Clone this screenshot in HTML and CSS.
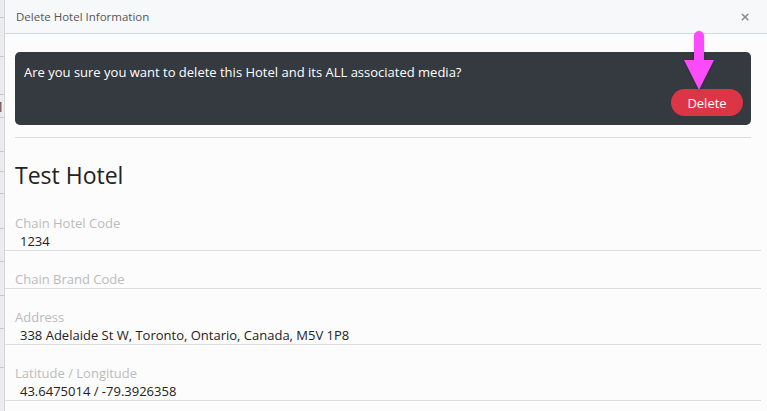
FILE: index.html
```html
<!DOCTYPE html>
<html lang="en">
<head>
    <meta charset="UTF-8">
    <meta name="viewport" content="width=device-width, initial-scale=1.0">
    <title>Delete Hotel Information</title>
    <link rel="stylesheet" href="styles.css">
</head>
<body>
    <div class="page">
        <!-- the table behind the dialog, only a sliver shows -->
        <div class="backdrop">
            <div class="bg-row" style="height:18px"></div>
            <div class="bg-row" style="height:39px"></div>
            <div class="bg-row" style="height:38px"></div>
            <div class="bg-row bg-num" style="height:23px">1</div>
            <div class="bg-row" style="height:34px"></div>
            <div class="bg-row" style="height:20px"></div>
            <div class="bg-row" style="height:22px"></div>
            <div class="bg-row" style="height:35px"></div>
            <div class="bg-row" style="height:33px"></div>
            <div class="bg-row" style="height:34px"></div>
            <div class="bg-row" style="height:33px"></div>
            <div class="bg-row" style="height:39px"></div>
        </div>

        <div class="modal">
            <div class="modal-header">
                <span class="modal-title">Delete Hotel Information</span>
                <span class="close">&times;</span>
            </div>

            <div class="modal-body">
                <div class="confirm">
                    <p>Are you sure you want to delete this Hotel and its ALL associated media?</p>
                    <div class="confirm-actions">
                        <button class="btn-delete">Delete</button>
                        <svg class="pointer" width="34" height="62" viewBox="0 0 34 62">
                            <path d="M12 6 a5 5 0 0 1 10 0 V30 H32 L17 60 L2 30 H12 Z" fill="#fb4cfb"/>
                        </svg>
                    </div>
                </div>

                <hr class="divider">

                <h2 class="hotel-name">Test Hotel</h2>

                <div class="field">
                    <div class="field-label">Chain Hotel Code</div>
                    <div class="field-value">1234</div>
                </div>
                <div class="field">
                    <div class="field-label">Chain Brand Code</div>
                </div>
                <div class="field">
                    <div class="field-label">Address</div>
                    <div class="field-value">338 Adelaide St W, Toronto, Ontario, Canada, M5V 1P8</div>
                </div>
                <div class="field">
                    <div class="field-label">Latitude / Longitude</div>
                    <div class="field-value">43.6475014 / -79.3926358</div>
                </div>
            </div>
        </div>
    </div>
</body>
</html>
```

FILE: styles.css
```css
html, body {
    margin: 0;
    padding: 0;
    height: 100%;
    overflow: hidden;
}
body {
    font-family: "Open Sans", "Liberation Sans", sans-serif;
    font-size: 13px;
    color: #222;
    background: #fcfcfc;
}
.page {
    display: flex;
    height: 411px;
}
.backdrop {
    width: 4px;
    flex-shrink: 0;
    background: #ececec;
    overflow: hidden;
}
.bg-row {
    border-bottom: 1px solid #c8c8c8;
    box-sizing: border-box;
    font-size: 15px;
    line-height: 22px;
    color: #555;
    text-indent: -4px;
}
.modal {
    flex: 1;
    border-left: 1px solid #d3d6dc;
    background: #fcfcfc;
    display: flex;
    flex-direction: column;
}
.modal-header {
    height: 34px;
    box-sizing: border-box;
    border-bottom: 1px solid #d5d8dd;
    background: #f7f8fa;
    display: flex;
    align-items: center;
    justify-content: space-between;
    padding: 0 15px 0 11px;
}
.modal-title {
    font-size: 11.5px;
    color: #555;
}
.close {
    font-size: 17px;
    line-height: 1;
    color: #8a8a8a;
    font-family: "DejaVu Sans", sans-serif;
    font-weight: bold;
    transform: scale(0.75);
}
.modal-body {
    padding: 18px 6px 0 10px;
    position: relative;
}
.confirm {
    background: #343a40;
    border-radius: 5px;
    height: 73px;
    margin-right: 10px;
    padding: 0 8px 0 9px;
    color: #fff;
    display: flex;
    flex-direction: column;
}
.confirm p {
    margin: 0;
    padding-top: 11px;
    line-height: 18px;
}
.confirm-actions {
    display: flex;
    justify-content: flex-end;
    margin-top: 8px;
    position: relative;
}
.btn-delete {
    width: 72px;
    height: 27px;
    border: none;
    border-radius: 14px;
    background: #dc3545;
    color: #fff;
    font-family: "Open Sans", "Liberation Sans", sans-serif;
    font-size: 13px;
    padding: 0;
}
.pointer {
    position: absolute;
    right: 27px;
    top: -59px;
    filter: drop-shadow(0 1px 1px rgba(0, 0, 0, 0.25));
}
.divider {
    border: none;
    border-top: 1px solid #dcdcdc;
    margin: 12px 10px 0 0;
}
.hotel-name {
    margin: 24px 0 0 0;
    font-size: 23px;
    font-weight: 400;
    line-height: 26px;
    color: #222;
}
.hotel-name + .field {
    margin-top: 7px;
}
.field {
    margin-left: -10px;
    padding: 19px 0 0 10px;
    border-bottom: 1px solid #dedede;
}
.field:first-of-type {
    padding-top: 0;
}
.field-label {
    color: #bbb;
    line-height: 18px;
}
.field-value {
    padding-left: 5px;
    line-height: 18px;
}
```
